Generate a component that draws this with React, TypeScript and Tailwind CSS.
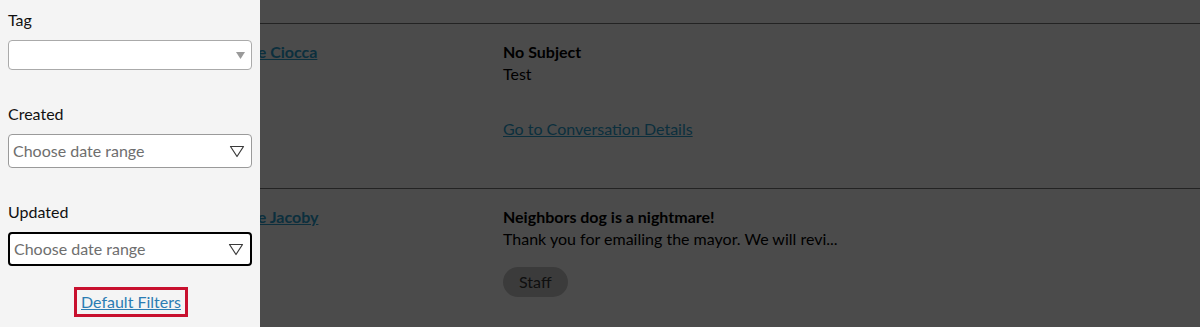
import React from "react";

const font = { fontFamily: "Lato, 'Liberation Sans', sans-serif" };

function DateRange({ focused }: { focused?: boolean }) {
  return (
    <div
      className={
        "flex items-center justify-between h-[34px] bg-white rounded-[4px] pl-[4px] pr-[6px] " +
        (focused ? "border-2 border-black pl-[3px] pr-[5px]" : "border border-[#9a9a9a]")
      }
    >
      <span className="text-[#6e6e6e] text-base">Choose date range</span>
      <svg width="16" height="13" viewBox="0 0 16 13" className="text-[#3a3a3a]">
        <path d="M1.5 1.5 H14.5 L8 11.5 Z" fill="none" stroke="currentColor" strokeWidth="1.2" strokeLinejoin="round" />
      </svg>
    </div>
  );
}

function Row({
  name,
  subject,
  preview,
  children,
}: {
  name: string;
  subject: string;
  preview: string;
  children: React.ReactNode;
}) {
  return (
    <div className="flex border-t border-[#777] h-[165px] pt-[17px] leading-[22px]">
      <div className="w-[503px] pl-[234px]">
        <a className="font-bold underline text-[#2a9fd0]">{name}</a>
      </div>
      <div className="flex flex-col items-start">
        <div className="font-bold text-black">{subject}</div>
        <div className="text-black">{preview}</div>
        {children}
      </div>
    </div>
  );
}

export default function App() {
  return (
    <div className="relative h-[327px] w-[1200px] overflow-hidden bg-white text-base" style={font}>
      <div className="pt-[23px]">
        <Row name="Julie Ciocca" subject="No Subject" preview="Test">
          <a className="mt-[33px] underline text-[#2a9fd0]">Go to Conversation Details</a>
        </Row>
        <Row
          name="Julie Jacoby"
          subject="Neighbors dog is a nightmare!"
          preview="Thank you for emailing the mayor. We will revi..."
        >
          <span className="mt-[17px] h-[30px] px-4 flex items-center rounded-full bg-[#c8c8c8] text-[#333]">
            Staff
          </span>
        </Row>
      </div>

      <div className="absolute inset-0 bg-[rgba(0,0,0,0.706)]" />

      <aside className="absolute left-0 top-0 bottom-0 w-[260px] bg-[#f4f4f4] px-2 pt-[9px] leading-[22px] text-[#111]">
        <div>Tag</div>
        <div className="mt-[9px] h-[30px] bg-white border border-[#aaaaaa] rounded-[4px] flex items-center justify-end pr-[6px]">
          <svg width="9" height="7" viewBox="0 0 9 7">
            <path d="M0 0 H9 L4.5 7 Z" fill="#9a9a9a" />
          </svg>
        </div>

        <div className="mt-[33px]">Created</div>
        <div className="mt-[9px]">
          <DateRange />
        </div>

        <div className="mt-[33px]">Updated</div>
        <div className="mt-[9px]">
          <DateRange focused />
        </div>

        <div className="mt-[21px] flex justify-center">
          <a className="border-[3px] border-[#c8102e] px-[4px] py-[1px] underline text-[#2b7cb3] ml-[2px]">
            Default Filters
          </a>
        </div>
      </aside>
    </div>
  );
}
